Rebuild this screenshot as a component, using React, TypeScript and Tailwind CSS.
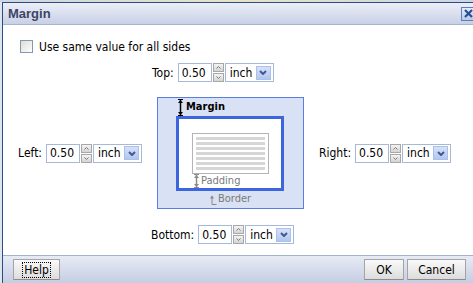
import React from "react";

const FONT = "font-['DejaVu_Sans_Condensed','Liberation_Sans',sans-serif]";

function Spinner() {
  return (
    <div className="ml-[1px] flex h-[19px] w-[11px] flex-col gap-[1px]">
      <div className="flex h-[9px] items-center justify-center border border-[#a8a8a8] bg-gradient-to-b from-[#f4f4f4] to-[#d4d4d4]">
        <svg width="5" height="3" viewBox="0 0 5 3">
          <path d="M0.5 2.5 L2.5 0.5 L4.5 2.5" stroke="#7a7a7a" strokeWidth="1" fill="none" />
        </svg>
      </div>
      <div className="flex h-[9px] items-center justify-center border border-[#a8a8a8] bg-gradient-to-b from-[#f4f4f4] to-[#d4d4d4]">
        <svg width="5" height="3" viewBox="0 0 5 3">
          <path d="M0.5 0.5 L2.5 2.5 L4.5 0.5" stroke="#7a7a7a" strokeWidth="1" fill="none" />
        </svg>
      </div>
    </div>
  );
}

function Field({ label }: { label: string }) {
  return (
    <div className="flex h-[19px] items-center">
      <span className="mr-[4px] text-[12px] text-black">{label}</span>
      <div className="flex h-[19px] w-[34px] items-center border border-[#a5b9d9] bg-white pl-[3px] text-[12px] text-black">
        0.50
      </div>
      <Spinner />
      <div className="ml-[1px] flex h-[19px] w-[49px] items-center justify-between border border-[#a5b9d9] bg-white pl-[4px] pr-[2px] text-[12px] text-black">
        <span>inch</span>
        <div className="flex h-[14px] w-[15px] items-center justify-center border border-[#adc0ea] bg-gradient-to-b from-[#d6e1fa] to-[#b3c6f0]">
          <svg width="8" height="5" viewBox="0 0 8 5">
            <path d="M1 1 L4 4 L7 1" stroke="#3f5a92" strokeWidth="2" fill="none" />
          </svg>
        </div>
      </div>
    </div>
  );
}

function VArrow({ color, h }: { color: string; h: number }) {
  return (
    <svg width="7" height={h} viewBox={`0 0 7 ${h}`}>
      <line x1="1" y1="0.5" x2="6" y2="0.5" stroke={color} strokeWidth="1" />
      <line x1="1" y1={h - 0.5} x2="6" y2={h - 0.5} stroke={color} strokeWidth="1" />
      <line x1="3.5" y1="1" x2="3.5" y2={h - 1} stroke={color} strokeWidth="1.5" />
      <path d={`M1 4 L3.5 1 L6 4 Z`} fill={color} />
      <path d={`M1 ${h - 4} L3.5 ${h - 1} L6 ${h - 4} Z`} fill={color} />
    </svg>
  );
}

function Diagram() {
  return (
    <div className="flex h-[112px] w-[147px] flex-col border border-[#5b7de2] bg-[#d9e1f4]">
      <div className="flex h-[18px] items-center pl-[19px]">
        <VArrow color="#000000" h={17} />
        <span className="ml-[2px] text-[11px] font-bold text-black">Margin</span>
      </div>
      <div className="ml-[18px] flex h-[75px] w-[108px] flex-col border-[3px] border-[#3d66de] bg-white">
        <div className="ml-[13px] mt-[14px] flex h-[41px] w-[77px] flex-col gap-[2px] border border-[#b4b4b4] bg-white pl-[3px] pr-[3px] pt-[3px]">
          <div className="h-[3px] bg-[#d6d6d6]" />
          <div className="h-[3px] bg-[#d6d6d6]" />
          <div className="h-[3px] bg-[#d6d6d6]" />
          <div className="h-[3px] bg-[#d6d6d6]" />
          <div className="h-[3px] bg-[#d6d6d6]" />
          <div className="h-[3px] bg-[#d6d6d6]" />
          <div className="h-[3px] bg-[#d6d6d6]" />
        </div>
        <div className="flex h-[14px] items-center pl-[14px]">
          <VArrow color="#8a8a8a" h={14} />
          <span className="ml-[1px] text-[11px] text-[#7a7a7a]">Padding</span>
        </div>
      </div>
      <div className="flex h-[17px] items-center pl-[52px]">
        <svg width="7" height="10" viewBox="0 0 7 10">
          <path d="M2 9.5 L2 1" stroke="#8a8a8a" strokeWidth="1" fill="none" />
          <path d="M2 9.5 L6.5 9.5" stroke="#8a8a8a" strokeWidth="1" fill="none" />
          <path d="M0 3.5 L2 0.5 L4 3.5 Z" fill="#8a8a8a" />
        </svg>
        <span className="ml-[1px] text-[11px] text-[#7a7a7a]">Border</span>
      </div>
    </div>
  );
}

function Button({ children, w, focus }: { children: string; w: number; focus?: boolean }) {
  return (
    <div
      className="flex h-[21px] items-center justify-center rounded-[1px] border border-[#a4a4a4] border-b-[#8c8c8c] bg-gradient-to-b from-[#fafafa] to-[#dcdcdc] text-[12px] text-black"
      style={{ width: w }}
    >
      {focus ? (
        <span className="border border-dotted border-black px-[1px] leading-[14px]">{children}</span>
      ) : (
        <span>{children}</span>
      )}
    </div>
  );
}

export default function App() {
  return (
    <div className={`relative h-[283px] w-[473px] overflow-hidden bg-[#dfe5ef] ${FONT}`}>
      <div className="h-[2px] bg-gradient-to-r from-[#cfd6e4] via-[#e8e2c8] to-[#cdd5e6]" />
      <div className="ml-[2px] flex h-[281px] w-[480px] flex-col border-l border-t border-[#2b4d86] bg-white">
        <div className="flex h-[22px] items-center justify-between border-b border-[#a9b5cf] bg-gradient-to-b from-[#eceff7] to-[#c8d0e6] pl-[5px] pr-[7px]">
          <span className="font-['Liberation_Sans',sans-serif] text-[13px] font-bold text-[#3d4566]">Margin</span>
          <div className="flex h-[14px] w-[14px] items-center justify-center border border-[#5d7fbc] bg-gradient-to-b from-[#e6edf9] to-[#b9c9e9]">
            <svg width="9" height="9" viewBox="0 0 9 9">
              <path d="M1 1 L8 8 M8 1 L1 8" stroke="#27508e" strokeWidth="2.2" fill="none" />
            </svg>
          </div>
        </div>
        <div className="flex h-[230px] flex-col bg-white pt-[15px]">
          <div className="ml-[17px] flex h-[13px] items-center">
            <div className="h-[13px] w-[13px] border border-[#8497b4] bg-gradient-to-br from-[#dcdcd8] to-[#ffffff]" />
            <span className="ml-[6px] text-[12px] text-black">Use same value for all sides</span>
          </div>
          <div className="ml-[149px] mt-[10px] flex">
            <Field label="Top:" />
          </div>
          <div className="mt-[15px] flex items-center pl-[16px]">
            <div className="flex w-[123px] justify-end">
              <Field label="Left:" />
            </div>
            <div className="ml-[15px]">
              <Diagram />
            </div>
            <div className="ml-[15px]">
              <Field label="Right:" />
            </div>
          </div>
          <div className="ml-[148px] mt-[16px] flex">
            <Field label="Bottom:" />
          </div>
        </div>
        <div className="flex flex-1 items-start justify-between border-t border-[#a3b2cd] bg-gradient-to-b from-[#e7ebf5] to-[#c5cde3] pl-[10px] pr-[16px] pt-[3px]">
          <Button w={47} focus>
            Help
          </Button>
          <div className="flex gap-[3px]">
            <Button w={40}>OK</Button>
            <Button w={59}>Cancel</Button>
          </div>
        </div>
      </div>
    </div>
  );
}
